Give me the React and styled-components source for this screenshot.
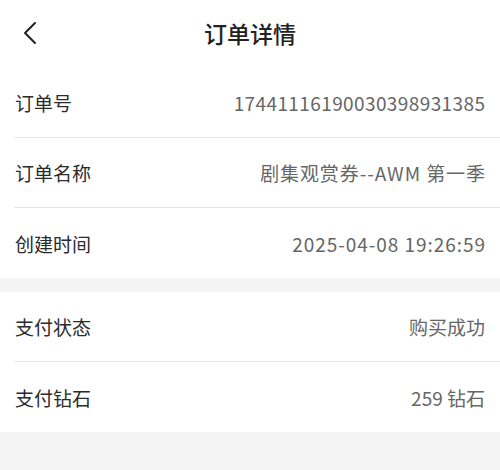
import React from "react";
import styled, { createGlobalStyle } from "styled-components";

const Global = createGlobalStyle`
  html, body { margin: 0; padding: 0; background: #f4f4f4; }
  body { font-family: "Noto Sans CJK SC", "Noto Sans", sans-serif; }
`;

const Page = styled.div`
  width: 500px;
  min-height: 470px;
  background: #f4f4f4;
  display: flex;
  flex-direction: column;
`;

const Header = styled.header`
  height: 68px;
  background: #fff;
  position: relative;
  display: flex;
  align-items: center;
  justify-content: center;
`;

const Back = styled.button`
  position: absolute;
  left: 16px;
  top: 18px;
  width: 28px;
  height: 30px;
  border: 0;
  padding: 0;
  background: transparent;
  display: flex;
  align-items: center;
  justify-content: center;
`;

const Title = styled.h1`
  margin: 0;
  font-size: 23px;
  font-weight: 500;
  color: #222;
  line-height: 1;
  margin-top: -2px;
`;

const Section = styled.section`
  background: #fff;
  margin-bottom: ${(p) => (p.$gap ? "14px" : "0")};
`;

const Row = styled.div`
  height: 70px;
  box-sizing: border-box;
  margin-left: 14px;
  padding-right: 15px;
  display: flex;
  align-items: center;
  justify-content: space-between;
  border-bottom: ${(p) => (p.$last ? "none" : "1px solid #e6e6e6")};
`;

const Label = styled.span`
  font-size: 19px;
  color: #2b2b2b;
  line-height: 1;
  padding-left: 1px;
`;

const Value = styled.span`
  font-size: 19px;
  color: #666;
  line-height: 1;
  letter-spacing: ${(p) => p.$ls || "0"};
  margin-right: ${(p) => (p.$ls ? `-${p.$ls}` : "0")};
`;

const sections = [
  [
    ["订单号", "17441116190030398931385", "0.4px"],
    ["订单名称", "剧集观赏券--AWM 第一季", "0.9px"],
    ["创建时间", "2025-04-08 19:26:59", "0.95px"],
  ],
  [
    ["支付状态", "购买成功"],
    ["支付钻石", "259 钻石"],
  ],
];

export default function App() {
  return (
    <Page>
      <Global />
      <Header>
        <Back aria-label="返回">
          <svg width="14" height="24" viewBox="0 0 14 24" fill="none">
            <path d="M12 2 L2 12 L12 22" stroke="#222" strokeWidth="2" strokeLinecap="round" strokeLinejoin="round" />
          </svg>
        </Back>
        <Title>订单详情</Title>
      </Header>
      {sections.map((rows, si) => (
        <Section key={si} $gap={si === 0}>
          {rows.map(([l, v, ls], i) => (
            <Row key={l} $last={i === rows.length - 1}>
              <Label>{l}</Label>
              <Value $ls={ls}>{v}</Value>
            </Row>
          ))}
        </Section>
      ))}
    </Page>
  );
}
